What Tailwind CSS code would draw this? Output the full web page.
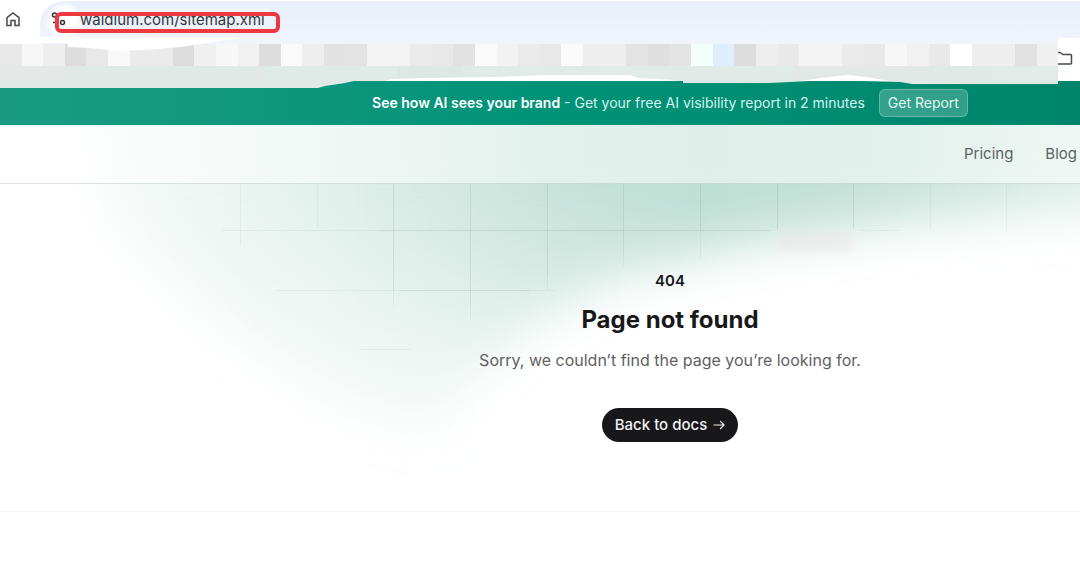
<!DOCTYPE html>
<html lang="en">
<head>
    <meta charset="UTF-8">
    <meta name="viewport" content="width=device-width, initial-scale=1.0">
    <title>Page not found</title>
    <script src="https://cdn.jsdelivr.net/npm/@tailwindcss/browser@4"></script>
</head>
<body class="font-['Inter',sans-serif] bg-white min-h-screen overflow-x-hidden">
    <!-- Browser chrome -->
    <div class="relative">
        <div class="flex h-11 bg-white">
            <button type="button" aria-label="Home" class="w-10 h-10 shrink-0 pl-1 flex items-center">
                <svg class="w-[18px] h-[18px]" viewBox="0 0 18 18" fill="none" stroke="#46494d" stroke-width="1.5">
                    <path d="M3 6.700 9 2l6 4.700V14.500h-4V9.500H7V14.500H3z"/>
                </svg>
            </button>
            <div class="relative flex-1 h-11 border-t border-white rounded-tl-3xl bg-linear-to-b from-[#e9f0fa] to-[#f0f4fd] flex items-start">
                <div class="absolute left-2 top-1 w-8 h-8 rounded-full bg-white blur-[2px]"></div>
                <svg class="absolute left-2 top-2 w-5 h-5" viewBox="0 0 20 20" fill="none" stroke="#303236" stroke-width="1.500">
                    <circle cx="6.500" cy="6" r="2"/>
                    <path d="M5 13.500h3"/>
                    <circle cx="14.500" cy="13.500" r="2"/>
                </svg>
                <input type="text" aria-label="Address" value="waldium.com/sitemap.xml" class="relative ml-10 mt-1.5 w-60 h-6 text-[15px] text-[#34383d] outline-none">
            </div>
        </div>

        <!-- Bookmarks bar -->
        <div class="flex h-[37px]">
            <div class="flex-1 flex flex-col">
                <div id="bookmarks" class="flex h-[22px]"></div>
                <div id="shade" class="flex flex-1"></div>
            </div>
            <button type="button" aria-label="All bookmarks" class="w-[22px] bg-white flex items-start pt-1.5">
                <svg class="w-4 h-4" viewBox="0 0 16 16" fill="none" stroke="#46494d" stroke-width="1.500">
                    <path d="M0 2.500h2l3 2h7.500q1 0 1 1v7.500q0 1-1 1H0"/>
                </svg>
            </button>
        </div>

        <!-- Marker strokes over the bars -->
        <svg class="absolute left-0 top-0 z-10 w-[1080px] h-[90px] pointer-events-none" viewBox="0 0 1080 90" fill="none">
            <path fill="#fff" d="M0 37H60L242 38 180 47 145 50 120 51 90 48 68 47V43H0z"/>
            <path fill="#e1e9e6" d="M0 80H358L345 83 325 86 318 88H0z"/>
            <path fill="#dfeae6" d="M683 80H1058V84H912L900 82 860 81H810L770 83H683z"/>
            <path fill="#fff" d="M384 81 392 79 425 78 494 77 548 75H630L638 78 675 80V81z"/>
            <path fill="#fff" d="M800 81 828 77 848 75 866 77 890 81z"/>
            <path fill="#fff" d="M1058 38H1080V50H1058z"/>
            <path fill="#eef3fc" d="M80 8H270V12H80z"/>
            <rect x="57" y="14" width="221" height="17" rx="4" stroke="#ee3840" stroke-width="4"/>
        </svg>
    </div>

    <!-- Announcement banner -->
    <div class="h-11 pl-[260px] flex items-center justify-center gap-3.5 whitespace-nowrap text-sm text-[#d5f3eb] bg-linear-to-r from-[#1a9a83] via-[#009378] to-[#00856c]">
        <p><strong class="font-semibold text-white">See how AI sees your brand</strong> - Get your free AI visibility report in 2 minutes</p>
        <button type="button" class="h-7 px-2 rounded-md border border-white/25 bg-white/20 text-[#e0f7f0]">Get Report</button>
    </div>

    <div class="relative overflow-hidden">
        <!-- Green glow and grid -->
        <svg class="absolute left-0 top-0 w-[1080px] h-[386px]" viewBox="0 0 1080 386" aria-hidden="true">
            <defs>
                <linearGradient id="tint" gradientUnits="userSpaceOnUse" x1="50" y1="0" x2="1140" y2="0">
                    <stop offset="0" stop-color="#b9dcd1" stop-opacity=".05"/>
                    <stop offset=".25" stop-color="#b9dcd1" stop-opacity=".42"/>
                    <stop offset=".45" stop-color="#b9dcd1" stop-opacity=".8"/>
                    <stop offset=".6" stop-color="#b9dcd1" stop-opacity=".95"/>
                    <stop offset=".75" stop-color="#b9dcd1" stop-opacity=".85"/>
                    <stop offset="1" stop-color="#b9dcd1" stop-opacity=".4"/>
                </linearGradient>
                <linearGradient id="fall" gradientUnits="userSpaceOnUse" x1="0" y1="70" x2="0" y2="330">
                    <stop offset="0" stop-color="#fff"/>
                    <stop offset="1" stop-color="#fff" stop-opacity=".1"/>
                </linearGradient>
                <mask id="fade" maskUnits="userSpaceOnUse" x="0" y="-80" width="1200" height="500">
                    <path fill="url(#fall)" d="M60-60H1200V75L900 98 740 122 620 152 530 200 470 255 430 310 330 275 210 190 110 100z" style="filter: blur(24px)"/>
                </mask>
            </defs>
            <rect width="1080" height="386" fill="url(#tint)" mask="url(#fade)"/>
            <path fill="#ebe6e6" opacity=".45" d="M777 105h76v22h-76z" style="filter: blur(3px)"/>
            <g fill="none" stroke="#7f9c93">
                <path stroke-opacity=".22" d="M393.500 58V165M470.500 58V180M547.500 58V150M623.500 58V130M700.500 58V104M777.500 58V104M853.500 58V104M380 105.500H770M400 165.500H530"/>
                <path stroke-opacity=".1" d="M240.500 58V120M317.500 58V104M930.500 58V104M1006.500 58V106M393.500 165V182M470.500 180V195M547.500 150V165M623.500 130V142M700.500 104V134M222 105.500H380M860 105.500H900M275 165.500H400M530 165.500H555M360 224.500H410"/>
            </g>
        </svg>

        <header class="relative h-[59px] pr-[3px] pt-px flex items-center justify-end border-b border-[#7d9990]/25 bg-white/50">
            <nav class="flex gap-8 text-[15px] text-[#5c6361]">
                <a href="#">Pricing</a>
                <a href="#">Blog</a>
            </nav>
        </header>

        <main class="relative h-[328px] pl-[260px] pt-[85px] flex flex-col items-center text-center border-b border-[#f3f3f3]">
            <p class="text-[15px] leading-6 font-semibold text-[#18181b]">404</p>
            <h1 class="mt-[11px] text-2xl leading-8 font-bold text-[#18181b]">Page not found</h1>
            <p class="mt-3 text-base leading-6 text-[#5f6163]">Sorry, we couldn’t find the page you’re looking for.</p>
            <a href="#" class="mt-9 h-[34px] px-[13px] rounded-full flex items-center gap-1.5 bg-[#18181b] text-[15px] font-medium text-[#f0f0f0]">
                Back to docs
                <svg class="w-3 h-3" viewBox="0 0 12 12" fill="none" stroke="currentColor" stroke-width="1.200" stroke-linecap="round" stroke-linejoin="round">
                    <path d="M1 6h10M7.500 2.500 11 6 7.500 9.500"/>
                </svg>
            </a>
        </main>
    </div>

    <script>
        // One colour per bookmark tile, left to right
        const tiles = ('e8e8e8 f7f7f7 eeeeee dddddd e8e8e8 f8f8f8 ebebeb ebebeb dcdcdc f0f0f0 f7f7f7 f1f1f1 dddddd fafafa eeeeee e2e2e2 e3e3e3 ' +
            'f3f3f3 f3f3f3 ebebeb e8e8e8 e2e2e2 fafafa f2f2f2 eaeaea e8e8e8 fafafa eeeeee eeeeee e3e3e3 dfdfdf e3e3e3 ' +
            'f2fffb dfeeff dddddd eeeeee e9e9e9 f4f4f4 f4f4f4 ebebeb e8e8e8 f7f7f7 f1f1f1 e9e9e9 ffffff eeeeee eeeeee e1e1e1 f0f0f0').split(' ');
        const shades = 'e5e8e6 e0e9e5 e0e9e5 e0e9e5 dfebe6 dfebe6 dbe8e3 dfebe7 dfebe7 e2ebe8 e0eae6 e0eae6 e1e8e5 e2e8e5 dfe9e5 e2ebe8'.split(' ');

        function fill(id, colours) {
            const row = document.getElementById(id);
            colours.forEach(colour => {
                const tile = document.createElement('div');
                tile.className = 'flex-1';
                tile.style.background = '#' + colour;
                row.appendChild(tile);
            });
        }

        fill('bookmarks', tiles);
        fill('shade', shades);
    </script>
</body>
</html>
